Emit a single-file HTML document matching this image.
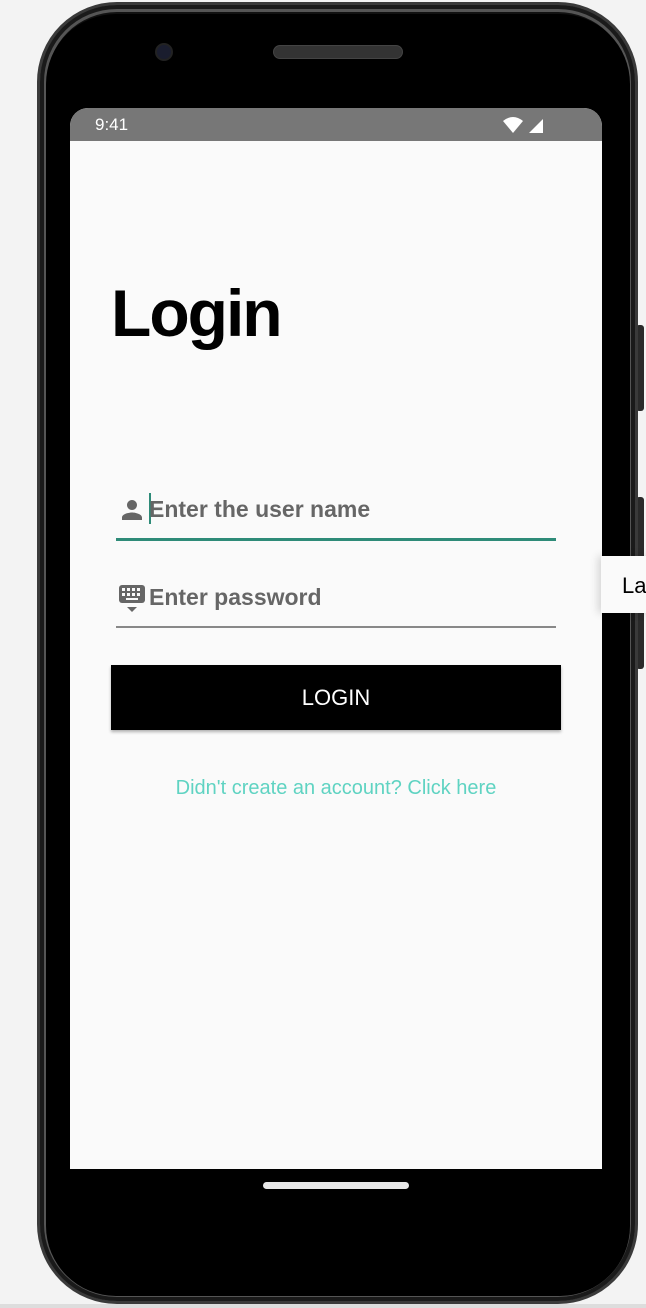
<!DOCTYPE html>
<html><head><meta charset="utf-8"><style>
*{margin:0;padding:0;box-sizing:border-box}
body{width:646px;height:1308px;background:#f3f3f3;position:relative;overflow:hidden;font-family:"Liberation Sans",Roboto,sans-serif}
.phone{position:absolute;left:37px;top:2px;width:601px;height:1302px;border-radius:80px;background:#111;border:3px solid #3a3a3a;box-shadow:inset 0 0 0 4px #1a1a1a,inset 0 0 0 7px #555}
.inner{position:absolute;left:46px;top:14px;width:584px;height:1282px;border-radius:70px;background:#000}
.btn{position:absolute;left:636px;width:8px;background:#2a2a2a;border-radius:3px}
.screen{position:absolute;left:70px;top:108px;width:532px;height:1061px;background:#fafafa;border-radius:18px 18px 0 0;overflow:hidden}
.status{height:33px;background:#777;color:#fff;font-size:17px;padding:7px 0 0 25px}
.cam{position:absolute;left:155px;top:43px;width:18px;height:18px;border-radius:50%;background:#1a1d2e;border:2px solid #222}
.spk{position:absolute;left:273px;top:45px;width:130px;height:14px;border-radius:7px;background:#333;border:1px solid #444}
.home{position:absolute;left:263px;top:1182px;width:146px;height:7px;border-radius:4px;background:#e8e8e8}
h1{position:absolute;left:41px;top:167px;font-size:66px;font-weight:bold;color:#000;letter-spacing:-2px}
.field{position:absolute;left:46px;width:440px;font-size:23px;font-weight:bold;color:#666}
.tip{position:absolute;left:601px;top:556px;width:50px;height:57px;background:#fafafa;box-shadow:-3px 0 8px rgba(0,0,0,.15);font-size:22px;padding:17px 0 0 21px;color:#000}
</style></head><body>
<div class="btn" style="top:325px;height:86px"></div>
<div class="btn" style="top:497px;height:172px"></div>
<div class="phone"></div>
<div class="inner"></div>
<div class="cam"></div><div class="spk"></div>
<div class="screen">
 <div class="status">9:41
  <svg style="position:absolute;left:433px;top:8px" width="42" height="18" viewBox="0 0 42 18"><path d="M0 5 Q10 -3 20 5 L10 17 Z" fill="#fff"/><path d="M26 17 L40 3 L40 17 Z" fill="#fff"/></svg>
 </div>
 <h1>Login</h1>
 <div class="field" style="top:385px;height:48px;border-bottom:3px solid #2e8b78">
  <svg style="position:absolute;left:1px;top:2px" width="30" height="30" viewBox="0 0 24 24"><path fill="#666" d="M12 12c2.2 0 4-1.8 4-4s-1.8-4-4-4-4 1.8-4 4 1.8 4 4 4zm0 2c-2.7 0-8 1.3-8 4v2h16v-2c0-2.7-5.3-4-8-4z"/></svg>
  <div style="position:absolute;left:33px;top:0;width:2px;height:31px;background:#2e8b78"></div>
  <span style="position:absolute;left:33px;top:3px">Enter the user name</span>
 </div>
 <div class="field" style="top:475px;height:45px;border-bottom:2px solid #888">
  <svg style="position:absolute;left:2px;top:2px" width="28" height="30" viewBox="0 0 28 30"><rect x="1" y="0" width="26" height="18" rx="3" fill="#666"/><g fill="#fafafa"><rect x="4" y="3" width="3" height="3"/><rect x="9" y="3" width="3" height="3"/><rect x="14" y="3" width="3" height="3"/><rect x="19" y="3" width="3" height="3"/><rect x="4" y="8" width="3" height="3"/><rect x="9" y="8" width="3" height="3"/><rect x="14" y="8" width="3" height="3"/><rect x="19" y="8" width="3" height="3"/><rect x="8" y="13" width="12" height="2"/></g><path d="M9 22 L19 22 L14 27 Z" fill="#666"/></svg>
  <span style="position:absolute;left:33px;top:1px">Enter password</span>
 </div>
 <div style="position:absolute;left:41px;top:557px;width:450px;height:65px;background:#000;color:#fff;font-size:22px;text-align:center;line-height:65px;box-shadow:0 2px 3px rgba(0,0,0,.3)">LOGIN</div>
 <div style="position:absolute;left:0;width:532px;top:669px;text-align:center;color:#5fd3c2;font-size:20px">Didn't create an account? Click here</div>
</div>
<div class="home"></div>
<div class="tip">La</div>
<div style="position:absolute;left:0;top:1304px;width:646px;height:4px;background:#ddd"></div>
</body></html>
